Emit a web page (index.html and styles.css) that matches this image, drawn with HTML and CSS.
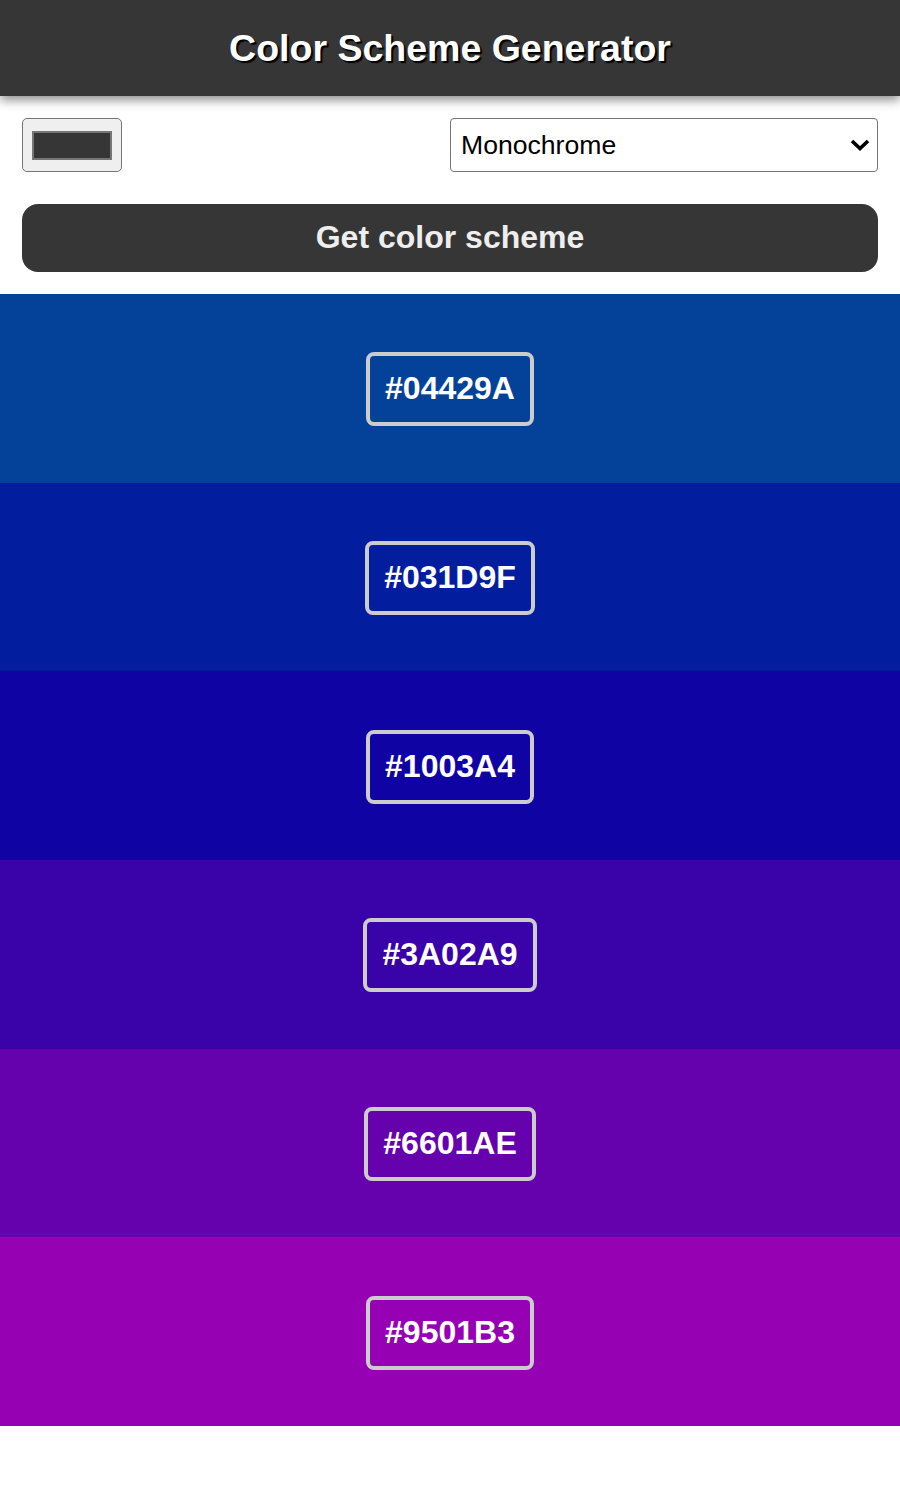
FILE: index.html
```html
<!DOCTYPE html>
<html>
<head>
<meta charset="utf-8">
<link rel="stylesheet" href="styles.css">
</head>
<body>
<header class="header">
  <h1 class="title">Color Scheme Generator</h1>
</header>
<main class="controls">
  <div class="row">
    <div class="color-input"><span class="swatch"></span></div>
    <div class="select">
      <span class="select-text">Monochrome</span>
      <svg class="chev" width="20" height="14" viewBox="0 0 20 14"><path d="M2 3 L10 10.5 L18 3" fill="none" stroke="#000" stroke-width="3.6"/></svg>
    </div>
  </div>
  <button class="btn">Get color scheme</button>
</main>
<section class="scheme">
  <div class="stripe" style="background:#04429A"><span class="hex">#04429A</span></div>
  <div class="stripe" style="background:#031D9F"><span class="hex">#031D9F</span></div>
  <div class="stripe" style="background:#1003A4"><span class="hex">#1003A4</span></div>
  <div class="stripe" style="background:#3A02A9"><span class="hex">#3A02A9</span></div>
  <div class="stripe" style="background:#6601AE"><span class="hex">#6601AE</span></div>
  <div class="stripe" style="background:#9501B3"><span class="hex">#9501B3</span></div>
</section>
</body>
</html>
```
FILE: styles.css
```css
* { box-sizing: border-box; }
body {
  margin: 0;
  font-family: "Liberation Sans", Arial, sans-serif;
  background: #fff;
}
.header {
  height: 96px;
  background: #363636;
  display: flex;
  align-items: center;
  justify-content: center;
  box-shadow: 0 4px 10px rgba(0,0,0,0.45);
  position: relative;
  z-index: 1;
}
.title {
  margin: 0;
  color: #fff;
  font-size: 37.5px;
  font-weight: bold;
  text-shadow: 2px 2px 1px #000;
}
.controls {
  padding: 22px 22px 22px;
  display: flex;
  flex-direction: column;
  gap: 32px;
}
.row {
  display: flex;
  justify-content: space-between;
  align-items: center;
}
.color-input {
  width: 100px;
  height: 54px;
  background: #efefef;
  border: 1px solid #767676;
  border-radius: 5px;
  display: flex;
  align-items: center;
  justify-content: center;
}
.swatch {
  width: 80px;
  height: 29px;
  background: #363636;
  border: 2px solid #767676;
}
.select {
  width: 428px;
  height: 54px;
  border: 1px solid #767676;
  border-radius: 4px;
  background: #fff;
  display: flex;
  align-items: center;
  justify-content: space-between;
  padding: 0 7px 0 10px;
}
.select-text {
  font-size: 26.6px;
  color: #000;
}
.btn {
  height: 68px;
  width: 100%;
  border: none;
  border-radius: 16px;
  background: #363636;
  color: #eeeeee;
  font-family: "Liberation Sans", Arial, sans-serif;
  font-size: 32px;
  font-weight: bold;
  padding: 0 0 2px;
}
.scheme {
  display: grid;
  grid-template-rows: repeat(6, 1fr);
  height: 1132px;
}
.stripe {
  display: flex;
  align-items: center;
  justify-content: center;
  padding-top: 2px;
}
.hex {
  color: #fff;
  font-size: 32px;
  font-weight: bold;
  padding: 15px 15px 17px;
  border: 4px solid #cccccc;
  border-radius: 8px;
  line-height: 34px;
}
```
